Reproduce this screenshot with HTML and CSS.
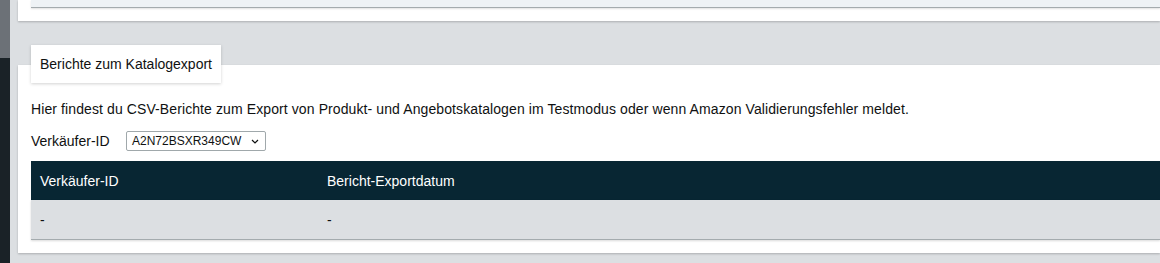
FILE: index.html
```html
<!DOCTYPE html>
<html lang="de">
<head>
<meta charset="utf-8">
<link rel="stylesheet" href="styles.css">
</head>
<body>
<div class="sidebar"><div class="sidebar-top"></div></div>
<main class="main">
  <div class="top-card"><div class="strip"></div></div>
  <section class="section">
    <div class="tab">Berichte zum Katalogexport</div>
    <div class="card">
      <p class="desc">Hier findest du CSV-Berichte zum Export von Produkt- und Angebotskatalogen im Testmodus oder wenn Amazon Validierungsfehler meldet.</p>
      <div class="field">
        <span class="label">Verkäufer-ID</span>
        <div class="select">
          <span class="select-value">A2N72BSXR349CW</span>
          <svg class="chevron" width="8" height="5" viewBox="0 0 8 5"><path d="M1 1l3 3 3-3" fill="none" stroke="#0f1111" stroke-width="1.2"/></svg>
        </div>
      </div>
      <div class="table">
        <div class="row head">
          <div class="cell c1">Verkäufer-ID</div>
          <div class="cell c2">Bericht-Exportdatum</div>
        </div>
        <div class="row body-row">
          <div class="cell c1">-</div>
          <div class="cell c2">-</div>
        </div>
      </div>
    </div>
  </section>
</main>
</body>
</html>
```

FILE: styles.css
```css
* { box-sizing: border-box; }
html, body { margin: 0; padding: 0; }
body {
  width: 1160px;
  height: 263px;
  overflow: hidden;
  display: flex;
  background: #dcdfe2;
  font-family: "Liberation Sans", Arial, sans-serif;
  font-size: 14px;
  color: #0f1111;
}
.sidebar {
  width: 10px;
  flex: none;
  background: #1a2227;
  display: flex;
  flex-direction: column;
}
.sidebar-top { height: 58px; background: #6c7177; }
.main {
  flex: 1;
  padding-left: 8px;
  display: flex;
  flex-direction: column;
}
.top-card {
  height: 21px;
  background: #fff;
  padding-left: 13px;
  box-shadow: 0 1px 2px rgba(0,0,0,0.22);
}
.strip {
  height: 8px;
  background: #eef2f5;
  border-bottom: 1px solid #a4abae;
  box-shadow: 0 1px 2px rgba(0,0,0,0.12);
}
.section { margin-top: 24px; display: flex; flex-direction: column; }
.tab {
  align-self: flex-start;
  margin-left: 13px;
  height: 38px;
  line-height: 38px;
  padding: 0 9px;
  background: #fff;
  box-shadow: 0 1px 3px rgba(0,0,0,0.18);
  position: relative;
  z-index: 1;
  margin-bottom: -18px;
}
.card {
  background: #fff;
  padding: 34px 0 13px 13px;
  box-shadow: 0 1px 2px rgba(0,0,0,0.22);
}
.desc { margin: 0; line-height: 18px; margin-top: 1px; letter-spacing: 0.1px; }
.field {
  display: flex;
  align-items: center;
  margin-top: 13px;
  height: 20px;
}
.label { width: 95px; }
.select {
  width: 140px;
  height: 20px;
  border: 1px solid #a0a8ab;
  border-radius: 2px;
  display: flex;
  align-items: center;
  justify-content: space-between;
  padding: 0 6px 0 5px;
  font-size: 12px;
}
.chevron { display: block; }
.table { margin-top: 10px; }
.row { display: flex; align-items: center; }
.head {
  height: 39px;
  background: #082633;
  color: #fff;
}
.body-row {
  height: 40px;
  background: #dcdfe2;
  border-bottom: 1px solid #a4abae;
  box-shadow: 0 1px 2px rgba(0,0,0,0.15);
}
.cell { padding-left: 9px; }
.c1 { width: 287px; }
.c2 { flex: 1; }
```
